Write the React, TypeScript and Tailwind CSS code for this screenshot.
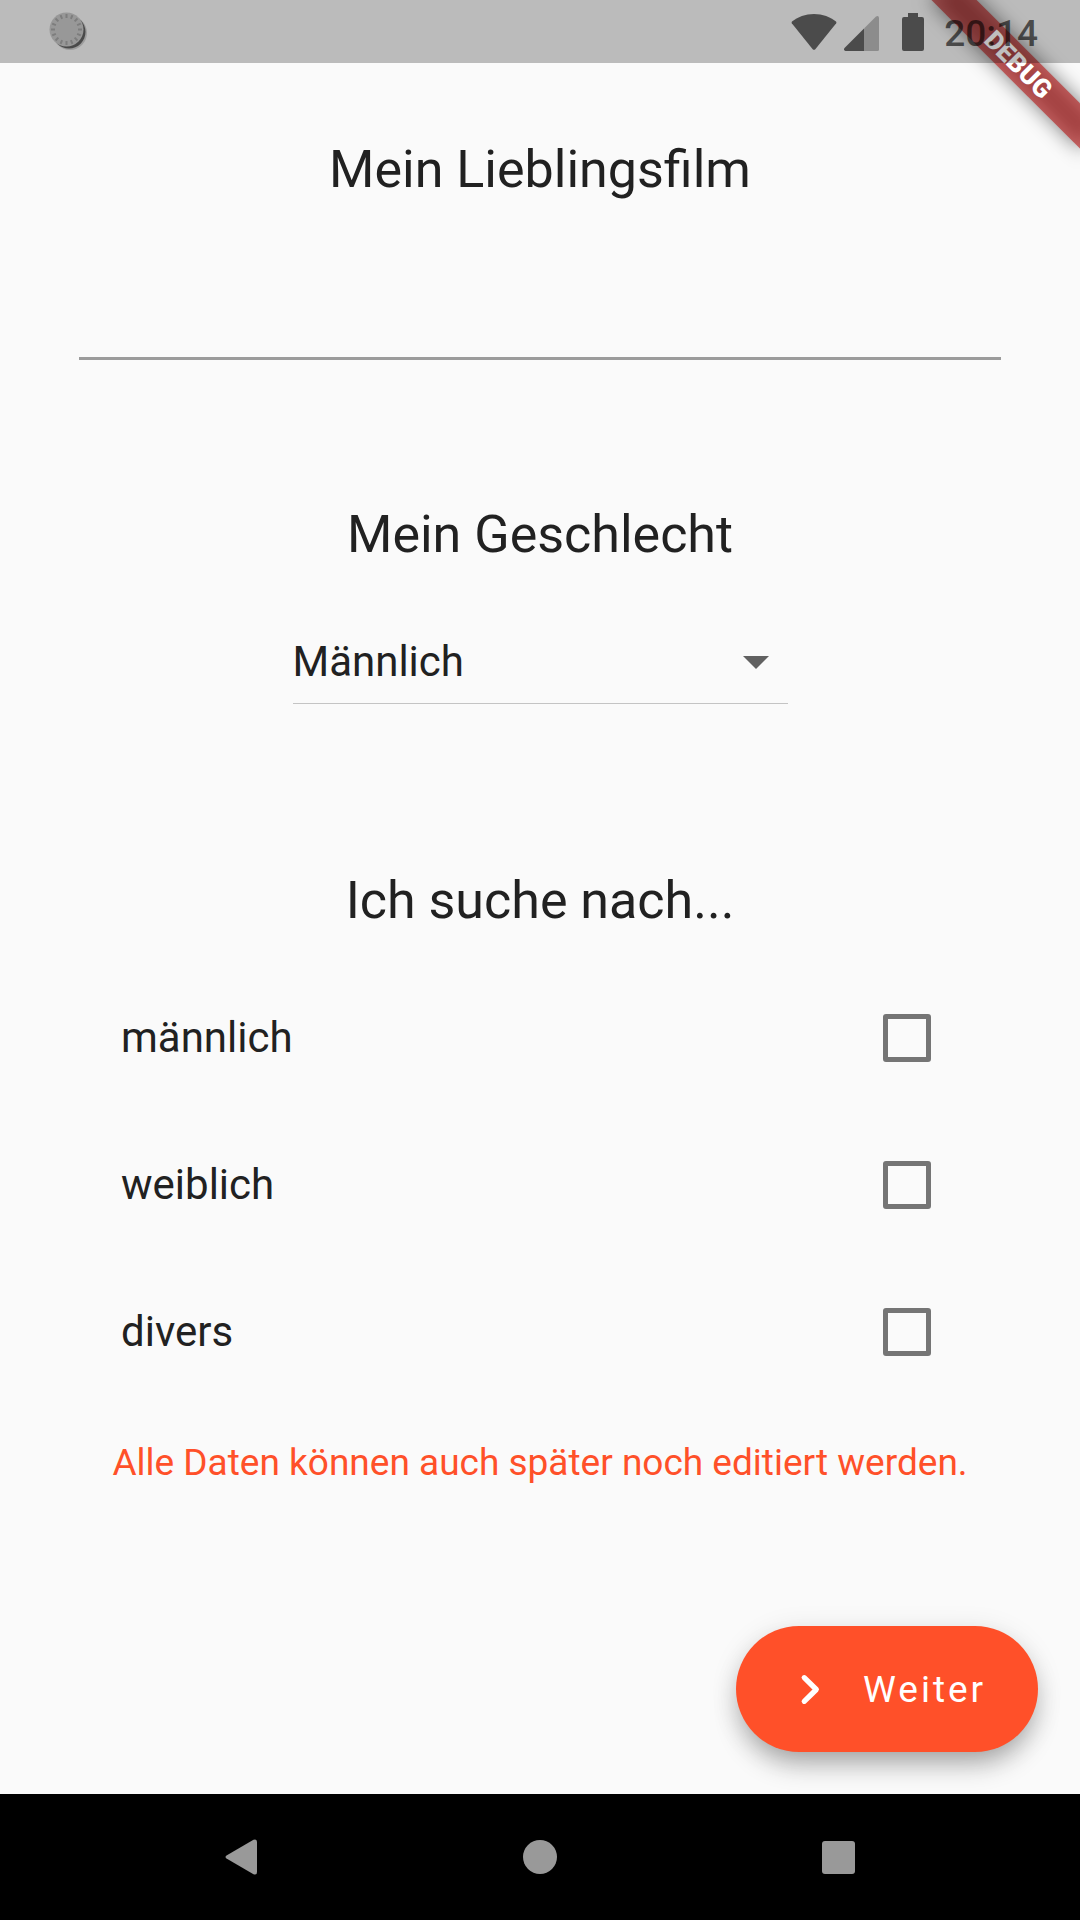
import { useState } from "react";

const TICKS = Array.from({ length: 16 }, (_, i) => i * 22.5);

function StatusBar() {
  return (
    <header className="relative z-20 flex h-[63px] items-center justify-between bg-black/25 pl-12 pr-[42px]">
      <svg className="size-10" viewBox="0 0 40 40" aria-hidden="true">
        <circle cx="22" cy="21" r="17" fill="#888" opacity="0.6" />
        <circle cx="21" cy="20" r="16.5" fill="#4a4a4a" />
        <circle cx="18.5" cy="17.5" r="17" fill="#989898" />
        {TICKS.map((angle) => (
          <line
            key={angle}
            x1="18.5"
            y1="2"
            x2="18.5"
            y2="6"
            stroke="#7d7d7d"
            strokeWidth="2"
            transform={`rotate(${angle} 18.5 17.5)`}
          />
        ))}
      </svg>
      <div className="flex items-center text-black/60">
        <svg className="h-[38px] w-[134px]" viewBox="0 0 134 38" fill="currentColor" aria-hidden="true">
          <path d="M24 1C15.500 1 7.500 4 2 8.500Q1.200 9.300 1.800 10.300L22.700 36.200Q24 37.500 25.300 36.200L46.200 10.300Q46.800 9.300 46 8.500C40.500 4 32.500 1 24 1Z" />
          <path d="M74 15.500V38H55.500Q53 37.200 54.500 35Z" />
          <path d="M74 15.500L86 3.500Q88.600 2 89 4.500V36.500Q89 38 87.500 38H74Z" fillOpacity="0.42" />
          <path d="M118 0H128V4H132Q134 4 134 6V36Q134 38 132 38H114Q112 38 112 36V6Q112 4 114 4H118Z" />
        </svg>
        <span className="ml-5 pt-1 text-[37px] font-medium leading-none">20:14</span>
      </div>
    </header>
  );
}

function DebugBanner() {
  return (
    <div className="pointer-events-none absolute right-0 top-0 z-10 size-[200px] overflow-hidden">
      <div className="absolute left-8 top-[47px] h-8 w-[210px] rotate-45">
        <div className="absolute inset-0 bg-black/50 blur-[10px]" />
        <div className="relative flex h-8 items-center justify-center bg-[#b71c1c]/63 pl-1 text-[26px] font-black leading-none text-white">
          DEBUG
        </div>
      </div>
    </div>
  );
}

const OPTIONS = ["männlich", "weiblich", "divers"];

function OptionRow({ label }: { label: string }) {
  const [checked, setChecked] = useState(false);
  return (
    <label className="flex h-[147px] items-center justify-between text-[42px] leading-[50px]">
      {label}
      <input
        type="checkbox"
        checked={checked}
        onChange={(e) => setChecked(e.target.checked)}
        className="size-12 appearance-none rounded-[3px] border-5 border-[#757575] checked:border-[#ff5029] checked:bg-[#ff5029]"
      />
    </label>
  );
}

function NavBar() {
  return (
    <nav className="flex h-[126px] items-center justify-center gap-[172px] bg-black text-[#999]">
      <button type="button" aria-label="Zurück" className="flex w-[126px] justify-center">
        <svg className="h-9 w-9" viewBox="0 0 36 36" fill="currentColor">
          <path d="M2.500 16.500L29.500 0.800Q33 -0.500 33 3V33Q33 36.500 29.500 35.200L2.500 19.500Q0.500 18 2.500 16.500Z" />
        </svg>
      </button>
      <button type="button" aria-label="Startseite" className="flex w-[126px] justify-center">
        <span className="size-[34px] rounded-full bg-[#999]" />
      </button>
      <button type="button" aria-label="Übersicht" className="flex w-[126px] justify-center">
        <span className="size-[33px] rounded-[3px] bg-[#999]" />
      </button>
    </nav>
  );
}

export default function App() {
  return (
    <div className="relative flex min-h-screen flex-col bg-[#fafafa] font-['Roboto',sans-serif] text-[#212121]">
      <StatusBar />
      <DebugBanner />

      <main className="flex flex-1 flex-col">
        <section className="px-[79px] pt-[77px]">
          <h2 className="text-center text-[52px] leading-[60px]">
            <label htmlFor="film">Mein Lieblingsfilm</label>
          </h2>
          <input
            id="film"
            type="text"
            className="mt-9 h-[124px] w-full border-b-3 border-[#9b9b9b] bg-transparent text-[42px] outline-none"
          />
        </section>

        <section className="flex flex-col items-center pt-[145px]">
          <h2 className="text-[52px] leading-[60px]">
            <label htmlFor="gender">Mein Geschlecht</label>
          </h2>
          <div className="relative mt-[53px]">
            <select
              id="gender"
              defaultValue="Männlich"
              className="h-[86px] w-[495px] appearance-none border-b border-[#c4c4c4] bg-transparent pt-0.5 text-[42px] leading-[50px] outline-none"
            >
              <option>Männlich</option>
              <option>Weiblich</option>
              <option>Divers</option>
            </select>
            <svg
              className="pointer-events-none absolute right-[19px] top-[38px] h-[13px] w-[26px]"
              viewBox="0 0 26 13"
              fill="#616161"
              aria-hidden="true"
            >
              <path d="M0 0H26L13 13Z" />
            </svg>
          </div>
        </section>

        <section className="pt-[167px]">
          <h2 className="text-center text-[52px] leading-[60px]">Ich suche nach...</h2>
          <div className="mt-[33px] pl-[121px] pr-[149px]">
            {OPTIONS.map((label) => (
              <OptionRow key={label} label={label} />
            ))}
          </div>
          <p className="mt-9 text-center text-[37px] leading-[44px] text-[#ff5029]">
            Alle Daten können auch später noch editiert werden.
          </p>
        </section>

        <button
          type="button"
          className="mb-[42px] mr-[42px] mt-auto flex h-[126px] w-[302px] items-center gap-[22px] self-end rounded-full bg-[#ff5029] pl-[42px] text-[37px] tracking-[3px] text-white shadow-[0_16px_28px_-6px_rgba(0,0,0,0.32),0_4px_28px_rgba(0,0,0,0.1)]"
        >
          <svg
            className="size-[63px] shrink-0"
            viewBox="0 0 24 24"
            fill="none"
            stroke="currentColor"
            strokeWidth="2"
            strokeLinecap="round"
            strokeLinejoin="round"
            aria-hidden="true"
          >
            <path d="M10 7.500L14.600 12L10 16.500" />
          </svg>
          <span className="pt-0.5">Weiter</span>
        </button>
      </main>

      <NavBar />
    </div>
  );
}
